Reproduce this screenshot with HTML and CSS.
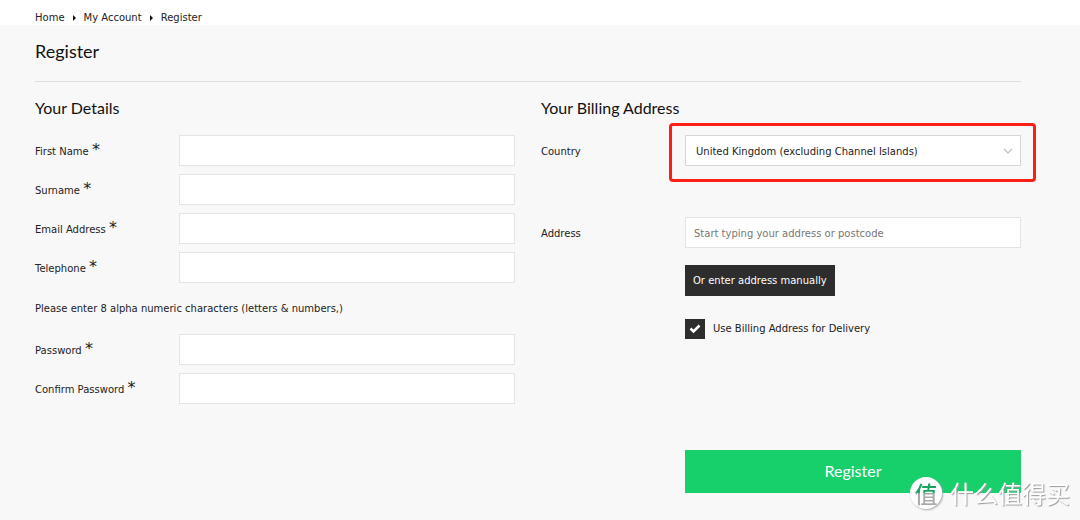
FILE: index.html
```html
<!DOCTYPE html>
<html lang="en">
<head>
<meta charset="utf-8">
<title>Register</title>
<link rel="stylesheet" href="styles.css">
</head>
<body>
<nav class="breadcrumb" aria-label="Breadcrumb">
  <a href="#">Home</a>
  <span class="crumb-arrow"></span>
  <a href="#">My Account</a>
  <span class="crumb-arrow"></span>
  <a href="#">Register</a>
</nav>
<main class="page">
  <h1 class="page-title">Register</h1>
  <form class="columns">
    <section class="column">
      <h2 class="section-title">Your Details</h2>
      <div class="fields">
        <div class="field"><label class="label" for="first">First Name <span class="required">*</span></label><input class="input" id="first" type="text"></div>
        <div class="field"><label class="label" for="surname">Surname <span class="required">*</span></label><input class="input" id="surname" type="text"></div>
        <div class="field"><label class="label" for="email">Email Address <span class="required">*</span></label><input class="input" id="email" type="email"></div>
        <div class="field"><label class="label" for="phone">Telephone <span class="required">*</span></label><input class="input" id="phone" type="tel"></div>
      </div>
      <p class="hint">Please enter 8 alpha numeric characters (letters &amp; numbers,)</p>
      <div class="fields">
        <div class="field"><label class="label" for="password">Password <span class="required">*</span></label><input class="input" id="password" type="password"></div>
        <div class="field"><label class="label" for="confirm">Confirm Password <span class="required">*</span></label><input class="input" id="confirm" type="password"></div>
      </div>
    </section>
    <section class="column">
      <h2 class="section-title">Your Billing Address</h2>
      <div class="field">
        <label class="label" for="country">Country</label>
        <div class="select-wrap">
          <select class="input select" id="country"><option>United Kingdom (excluding Channel Islands)</option></select>
          <svg class="chevron" viewBox="0 0 10 6" aria-hidden="true"><path d="M1 1l4 4 4-4"/></svg>
          <span class="highlight"></span>
        </div>
      </div>
      <div class="field address">
        <label class="label" for="address">Address</label>
        <input class="input" id="address" type="text" placeholder="Start typing your address or postcode">
      </div>
      <div class="actions">
        <button class="manual" type="button">Or enter address manually</button>
        <label class="delivery"><span class="check-wrap"><input class="check" type="checkbox" checked><svg class="tick" viewBox="0 0 12 10" aria-hidden="true"><path d="M1.5 4.5l3 3L10.5 1.5"/></svg></span>Use Billing Address for Delivery</label>
        <button class="submit" type="submit">Register</button>
      </div>
    </section>
  </form>
</main>
<div class="watermark">
  <span class="watermark-badge">值</span>
  <span class="watermark-name">什么值得买</span>
</div>
</body>
</html>
```
FILE: styles.css
```css
* { box-sizing: border-box; }
body {
  margin: 0;
  min-height: 100vh;
  background: #f8f8f8;
  color: #222;
  font: 10px/16px "DejaVu Sans", Verdana, sans-serif;
}
.breadcrumb {
  display: flex;
  align-items: center;
  gap: 8px;
  height: 25px;
  padding: 10px 35px 0;
  background: #fff;
}
.breadcrumb a { color: #222; text-decoration: none; }
.crumb-arrow {
  border: 3px solid transparent;
  border-left-color: #111;
  border-right: 0;
}
.page { padding: 13px 59px 27px 35px; }
.page-title, .section-title {
  margin: 0;
  color: #111;
  font-family: Lato, sans-serif;
  font-weight: 400;
}
.page-title {
  padding-bottom: 17px;
  border-bottom: 1px solid #dfdfdf;
  font-size: 18px;
  line-height: 26px;
}
.columns {
  display: grid;
  grid-template-columns: 1fr 1fr;
  gap: 26px;
  padding-top: 14px;
}
.column { display: flex; flex-direction: column; }
.section-title {
  margin-bottom: 16px;
  font-size: 16px;
  line-height: 23px;
}
.fields { display: grid; gap: 8px; }
.field {
  display: grid;
  grid-template-columns: 30% 1fr;
  align-items: center;
}
.label { padding-top: 2px; }
.required { font-size: 16px; line-height: 10px; }
.input {
  width: 100%;
  height: 31px;
  padding: 2px 8px 0;
  border: 1px solid #e4e4e4;
  border-radius: 0;
  background: #fff;
  color: #222;
  font: inherit;
}
.input::placeholder { color: #777; opacity: 1; }
.hint { margin: 18px 0 17px; }
.select-wrap { position: relative; }
.select {
  display: block;
  appearance: none;
  padding: 2px 24px 0 10px;
  border-color: #d6d6d6;
}
.chevron {
  position: absolute;
  top: 13px;
  right: 8px;
  width: 10px;
  height: 6px;
  fill: none;
  stroke: #c4c4c4;
  stroke-width: 1.4;
}
.highlight {
  position: absolute;
  inset: -12px -15px -16px -16px;
  border: 3px solid #fb2015;
  border-radius: 4px;
  pointer-events: none;
}
.address { margin-top: 51px; }
.actions {
  display: flex;
  flex: 1;
  flex-direction: column;
  align-items: flex-start;
  margin: 17px 0 0 30%;
}
.manual {
  height: 31px;
  padding: 1px 8px 0;
  border: 0;
  background: #2d2d2d;
  color: #fff;
  font: inherit;
}
.delivery {
  display: flex;
  align-items: center;
  gap: 8px;
  margin: 23px 0 111px;
}
.check-wrap { position: relative; display: flex; }
.check {
  appearance: none;
  width: 20px;
  height: 20px;
  margin: 0;
  background: #2d2d2d;
}
.tick {
  position: absolute;
  top: 5px;
  left: 4px;
  width: 12px;
  height: 10px;
  fill: none;
  stroke: #fff;
  stroke-width: 2.6;
}
.submit {
  width: 100%;
  height: 43px;
  padding: 0 0 2px;
  border: 0;
  background: #17d06c;
  color: #fff;
  font: 16px/20px Lato, sans-serif;
}
.watermark {
  position: fixed;
  right: 10px;
  bottom: 11px;
  display: flex;
  align-items: center;
  gap: 8px;
  font-family: "Noto Sans CJK SC", sans-serif;
  color: #fff;
}
.watermark-badge {
  width: 32px;
  height: 32px;
  border-radius: 50%;
  background: #fff;
  box-shadow: 1px 1px 2px #aaa;
  color: transparent;
  background-image: linear-gradient(#18a45d 48%, #aaa 52%), linear-gradient(#fff, #fff);
  background-clip: text, border-box;
  font-size: 23px;
  font-style: oblique 8deg;
  font-weight: 500;
  line-height: 32px;
  text-align: center;
}
.watermark-name {
  font-size: 24px;
  line-height: 32px;
  text-shadow: 1px 1px 1px #999;
}
```
